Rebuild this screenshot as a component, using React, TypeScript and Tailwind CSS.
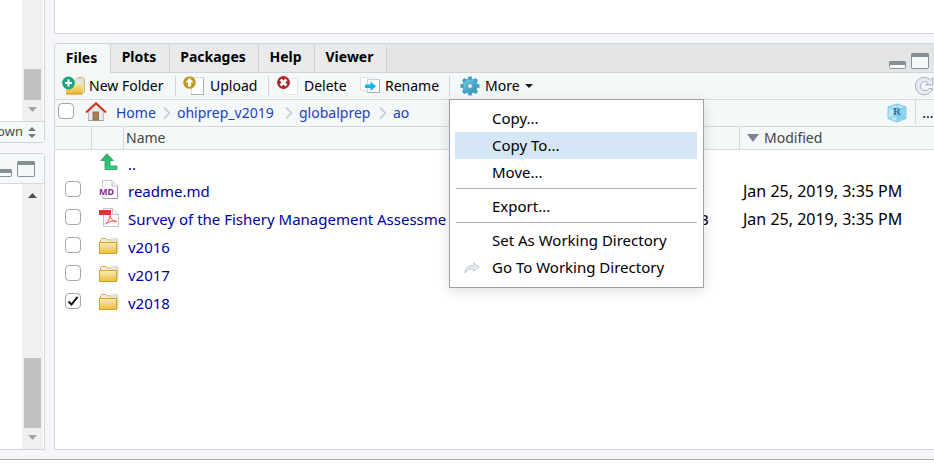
import type { ReactNode } from "react";

const font = "font-['Noto_Sans','Open_Sans',sans-serif]";

function MinimizeIcon() {
  return (
    <svg width="17" height="8" viewBox="0 0 17 8" className="shrink-0">
      <rect x="0.5" y="0.5" width="16" height="7" rx="1" fill="#f7fafa" stroke="#859398" />
      <path d="M0 2Q0 0 2 0H15Q17 0 17 2V4H0Z" fill="#859094" />
    </svg>
  );
}

function MaximizeIcon() {
  return (
    <svg width="18" height="16" viewBox="0 0 18 16" className="shrink-0">
      <rect x="0.5" y="0.5" width="17" height="15" rx="1" fill="#f4f8f9" stroke="#859398" />
      <path d="M0 2Q0 0 2 0H16Q18 0 18 2V4H0Z" fill="#859094" />
    </svg>
  );
}

function NewFolderIcon() {
  return (
    <svg width="23" height="19" viewBox="0 0 23 19">
      <defs>
        <linearGradient id="folderNew" x1="0" y1="0" x2="0" y2="1">
          <stop offset="0" stopColor="#f7edae" />
          <stop offset="1" stopColor="#edb62c" />
        </linearGradient>
      </defs>
      <path d="M14 3.5L16 1.5H21L22.5 3V16L20 17.5H14Z" fill="#e5dfc3" stroke="#cdb66d" />
      <path d="M12 6L15 3H20V8H12Z" fill="#e4e4e2" />
      <path d="M4 7H20.5V18H4Z" fill="url(#folderNew)" />
      <path d="M4 18H20.5" stroke="#c99619" />
      <circle cx="6.5" cy="7" r="6.4" fill="#18a77c" />
      <path d="M6.5 3.5V10.5M3 7H10" stroke="#fff" strokeWidth="2.2" />
    </svg>
  );
}

function UploadIcon() {
  return (
    <svg width="21" height="19" viewBox="0 0 21 19">
      <path d="M6.5 1.5H20.5V18.5H8.5V10Z" fill="#fff" stroke="#d4d9dc" />
      <path d="M8 18.5H20.5V3" fill="none" stroke="#a9afb4" />
      <circle cx="6.5" cy="6.5" r="6.3" fill="#c29b1e" />
      <path d="M6.5 2L10.5 6.5H8V10.5H5V6.5H2.5Z" fill="#fff" />
    </svg>
  );
}

function DeleteIcon() {
  return (
    <svg width="21" height="19" viewBox="0 0 21 19">
      <path d="M5.5 2.5H20.5V18.5H6.5Z" fill="#fff" stroke="#e2e6e8" />
      <circle cx="6.5" cy="6.5" r="6.4" fill="#b3202a" />
      <path d="M3.6 3.6L9.4 9.4M9.4 3.6L3.6 9.4" stroke="#fff" strokeWidth="2.8" />
    </svg>
  );
}

function RenameIcon() {
  return (
    <svg width="21" height="17" viewBox="0 0 21 17">
      <rect x="0.5" y="0.5" width="13" height="13" fill="#fff" stroke="#dde2e5" />
      <rect x="7.5" y="2.5" width="12" height="13" fill="#fdfeff" stroke="#cbd0d5" />
      <path d="M7 15.5H19.5V3" fill="none" stroke="#a5abb1" />
      <path d="M5 7.5H10.5V4.5L16 9.2L10.5 14V11H5Z" fill="#19aef0" />
    </svg>
  );
}

function GearIcon() {
  const teeth = [0, 45, 90, 135, 180, 225, 270, 315];
  return (
    <svg width="20" height="20" viewBox="0 0 20 20">
      <defs>
        <linearGradient id="gear" x1="0" y1="0" x2="1" y2="1">
          <stop offset="0" stopColor="#6fd6e6" />
          <stop offset="1" stopColor="#2b87b8" />
        </linearGradient>
      </defs>
      <g fill="#3c9fc4">
        {teeth.map((a) => (
          <path key={a} d="M7.2 5L8.4 0.4H11.6L12.8 5Z" transform={`rotate(${a} 10 10)`} />
        ))}
      </g>
      <circle cx="10" cy="10" r="7" fill="url(#gear)" stroke="#45a5c5" />
      <circle cx="10" cy="10" r="2.6" fill="#d7edf3" stroke="#6e9dae" strokeWidth="1.2" />
    </svg>
  );
}

function RefreshIcon() {
  return (
    <svg width="19" height="20" viewBox="0 0 19 20">
      <path
        d="M17.8 1.5V9H10.8L13.2 6.6A4.6 4.6 0 1 0 14 12.5H17.6A8.8 8.8 0 1 1 15.4 3.8Z"
        fill="#e6ebf5"
        stroke="#a9b0bd"
        strokeLinejoin="round"
      />
    </svg>
  );
}

function HomeIcon() {
  return (
    <svg width="22" height="20" viewBox="0 0 22 20">
      <path d="M3.5 9.5L11 2.5L18.5 9.5V18.5H3.5Z" fill="#e9e9ea" stroke="#bcbec0" />
      <path d="M3 18.5H19" stroke="#9fa2a5" />
      <rect x="8" y="10" width="5.5" height="8" fill="#ab7f55" stroke="#8a6440" strokeWidth="0.8" />
      <path d="M1 10.5L11 1.3L21 10.5" fill="none" stroke="#cf3018" strokeWidth="2" />
    </svg>
  );
}

function ProjectIcon() {
  return (
    <svg width="20" height="20" viewBox="0 0 20 20">
      <path d="M10 1L19 4V15.5L10 19L1 15.5V4Z" fill="#b4e6f7" stroke="#7acbe0" />
      <path d="M10 7L19 4V15.5L10 19Z" fill="#8dd3f0" />
      <path d="M1 4L10 7L19 4M10 7V19M1 15.5L10 12.5L19 15.5M10 1V7" fill="none" stroke="#74c6dd" strokeWidth="0.8" />
      <text x="6" y="12" fontSize="11" fontWeight="bold" fill="#3a6fa8" className="font-['Liberation_Serif',serif]">
        R
      </text>
    </svg>
  );
}

function Chevron() {
  return (
    <svg width="8" height="14" viewBox="0 0 8 14" className="shrink-0">
      <path d="M1 1.5L6.5 7L1 12.5" fill="none" stroke="#c3c9ce" strokeWidth="1.5" />
    </svg>
  );
}

function UpIcon() {
  return (
    <svg width="18" height="18" viewBox="0 0 18 18">
      <defs>
        <linearGradient id="up" x1="0" y1="0" x2="0" y2="1">
          <stop offset="0" stopColor="#2fae68" />
          <stop offset="1" stopColor="#35cf82" />
        </linearGradient>
      </defs>
      <path d="M7 0.7L13.3 7.5H10V13H17V16.5H5V7.5H0.8Z" fill="url(#up)" stroke="#2a9c5f" strokeWidth="0.8" />
    </svg>
  );
}

function MarkdownIcon() {
  return (
    <svg width="20" height="20" viewBox="0 0 20 20">
      <path d="M3.5 0.5H13L18.5 6V18.5H3.5Z" fill="#fcfcfc" stroke="#c4c4c4" />
      <path d="M13 0.5V6H18.5" fill="#f2f2f2" stroke="#c4c4c4" />
      <path d="M4 18.5H18.5V6" fill="none" stroke="#a2a2a2" />
      <rect x="0" y="7" width="15" height="9" fill="#fcfcfc" />
      <text x="0" y="15" fontSize="9" fontWeight="bold" fill="#8a2a92" className="font-['Noto_Sans',sans-serif]">
        MD
      </text>
    </svg>
  );
}

function PdfIcon() {
  return (
    <svg width="20" height="20" viewBox="0 0 20 20">
      <path d="M4.5 0.5H13.5L19.5 6.5V18.5H4.5Z" fill="#fcfcfc" stroke="#c4c4c4" />
      <path d="M13.5 0.5V6.5H19.5" fill="#f2f2f2" stroke="#c4c4c4" />
      <rect x="0" y="2" width="12" height="5" fill="#e03438" />
      <path
        d="M11 7.5C11.5 11 13.5 13 17.5 14C18 12.5 13 12 7 15.5C5.5 16.5 7.5 16.5 9 13.5Q11 10 11 7.5Z"
        fill="none"
        stroke="#f0584d"
      />
    </svg>
  );
}

function FolderIcon() {
  return (
    <svg width="20" height="18" viewBox="0 0 20 18">
      <defs>
        <linearGradient id="folder" x1="0" y1="0" x2="0" y2="1">
          <stop offset="0" stopColor="#f7efb0" />
          <stop offset="1" stopColor="#eebb3c" />
        </linearGradient>
      </defs>
      <path d="M12 2L14 0.8H18L19.5 2.5V15L17.5 16.5H12Z" fill="#e2dab5" />
      <path d="M1.5 6V2.8L3 1.5H7L8.5 3L16 2.8V6" fill="#f3efd9" stroke="#cdae4d" />
      <path d="M11 3.2L13 1H17V5H11Z" fill="#e2e2e0" />
      <rect x="0.5" y="5.5" width="17" height="11" fill="url(#folder)" stroke="#d3a331" />
    </svg>
  );
}

function ShareArrow() {
  return (
    <svg width="16" height="12" viewBox="0 0 16 12">
      <path d="M9.5 0.8L15.2 5L9.5 9.3V6.8Q4 6.5 0.8 11Q1.2 3.6 9.5 3.4Z" fill="#e5e9ee" stroke="#c1c7ce" strokeWidth="0.9" />
    </svg>
  );
}

function Checkbox({ label, checked = false }: { label: string; checked?: boolean }) {
  return (
    <label className="relative block size-4">
      <input
        type="checkbox"
        aria-label={label}
        defaultChecked={checked}
        className="peer block size-4 appearance-none rounded border border-[#a6a6a6] bg-white"
      />
      <svg
        width="16"
        height="16"
        viewBox="0 0 16 16"
        className="pointer-events-none absolute top-0 left-0 hidden peer-checked:block"
      >
        <path d="M3.5 8.5L6.5 11.5L12.5 3.8" fill="none" stroke="#161616" strokeWidth="2" />
      </svg>
    </label>
  );
}

function Divider() {
  return <span className="h-5 w-px shrink-0 bg-[#cfd4d8]" />;
}

function ToolButton({ icon, children, className }: { icon: ReactNode; children: ReactNode; className: string }) {
  return (
    <button type="button" className={`flex shrink-0 items-center whitespace-nowrap ${className}`}>
      {icon}
      {children}
    </button>
  );
}

function Arrow({ up = false, dark = false }: { up?: boolean; dark?: boolean }) {
  return (
    <svg width="9" height="5" viewBox="0 0 9 5" className="shrink-0">
      <path d={up ? "M0 5L4.5 0L9 5Z" : "M0 0H9L4.5 5Z"} fill={dark ? "#505050" : "#a3a3a3"} />
    </svg>
  );
}

function MenuItem({ children, icon, active = false }: { children: ReactNode; icon?: ReactNode; active?: boolean }) {
  return (
    <li role="none">
      <button
        type="button"
        role="menuitem"
        className={`flex h-[27px] w-full items-center text-left text-[15px] ${active ? "bg-[#d5e7f6]" : ""}`}
      >
        <span className="flex w-[37px] justify-center pr-1">{icon}</span>
        {children}
      </button>
    </li>
  );
}

function MenuSeparator() {
  return <li role="separator" className="ml-px mt-0.5 mb-1 h-px bg-[#b4b4b8]" />;
}

const tabs = [
  { name: "Files", width: "w-14" },
  { name: "Plots", width: "w-[59px]" },
  { name: "Packages", width: "w-[89px]" },
  { name: "Help", width: "w-14" },
  { name: "Viewer", width: "w-[72px]" },
];

const crumbs = [
  { name: "Home", width: "w-[47px]" },
  { name: "ohiprep_v2019", width: "w-[108px]" },
  { name: "globalprep", width: "w-20" },
  { name: "ao", width: "" },
];

const files = [
  { name: "readme.md", icon: <MarkdownIcon />, size: "", modified: "Jan 25, 2019, 3:35 PM" },
  {
    name: "Survey of the Fishery Management Assessme",
    icon: <PdfIcon />,
    size: "B",
    modified: "Jan 25, 2019, 3:35 PM",
  },
  { name: "v2016", icon: <FolderIcon />, size: "", modified: "" },
  { name: "v2017", icon: <FolderIcon />, size: "", modified: "" },
  { name: "v2018", icon: <FolderIcon />, size: "", modified: "", checked: true },
];

function LeftColumn() {
  return (
    <aside className="flex w-[45px] shrink-0 flex-col gap-2.5">
      <section className="flex h-[143px] flex-col rounded-br border-r border-b border-[#d0d5d9] bg-white">
        <div className="flex flex-1 justify-end pr-px">
          <div className="flex w-[21px] flex-col items-center justify-end gap-[7px] bg-[#f0f0f0] pb-[9px]">
            <span className="h-[31px] w-[17px] bg-[#c1c1c1]" />
            <Arrow />
          </div>
        </div>
        <div className="flex h-[21px] items-center gap-2 border-t border-[#d6dadc] bg-[#f4f8f9] text-[13px] text-[#4c4c4c]">
          <span className="flex w-5 justify-center">own</span>
          <svg width="8" height="11" viewBox="0 0 8 11" className="shrink-0">
            <path d="M0 4L4 0L8 4ZM0 7H8L4 11Z" fill="#777" />
          </svg>
        </div>
      </section>
      <section className="flex flex-1 flex-col rounded-tr border-t border-r border-b border-[#d0d5d9] bg-white">
        <div className="flex h-[30px] items-end justify-end gap-[5px] overflow-hidden border-b border-[#d6dadc] bg-[#f4f8f9] pr-[9px] pb-1.5">
          <MinimizeIcon />
          <MaximizeIcon />
        </div>
        <div className="flex flex-1 justify-end pr-px">
          <div className="flex w-[21px] flex-col items-center bg-[#f0f0f0] pt-[9px] pb-[9px]">
            <Arrow up dark />
            <span className="mt-auto mb-[7px] h-[70px] w-[17px] bg-[#c1c1c1]" />
            <Arrow />
          </div>
        </div>
      </section>
    </aside>
  );
}

function MoreMenu() {
  return (
    <ul
      role="menu"
      className="absolute top-full left-0 z-10 w-[255px] border border-[#9da1a8] bg-white pt-[5px] pr-1.5 pb-1.5 pl-[5px] shadow-[0_3px_12px_rgba(0,0,0,0.14)]"
    >
      <MenuItem>Copy...</MenuItem>
      <MenuItem active>Copy To...</MenuItem>
      <MenuItem>Move...</MenuItem>
      <MenuSeparator />
      <MenuItem>Export...</MenuItem>
      <MenuSeparator />
      <MenuItem>Set As Working Directory</MenuItem>
      <MenuItem icon={<ShareArrow />}>Go To Working Directory</MenuItem>
    </ul>
  );
}

function FilesPane() {
  return (
    <section className="flex flex-1 flex-col rounded-tl border-t border-b border-l border-[#d0d5d9] bg-white">
      <div className="flex h-[29px] shrink-0 rounded-tl bg-[#e4e5e7]">
        <div role="tablist" className="flex text-sm font-bold">
          {tabs.map((tab, i) => (
            <button
              key={tab.name}
              type="button"
              role="tab"
              aria-selected={i === 0}
              className={`flex items-center justify-center rounded-t border-r border-[#d0d3d6] pr-0.5 pb-0.5 ${tab.width} ${
                i === 0 ? "bg-[#f4f8f9]" : "border-b bg-[#e9eaec]"
              }`}
            >
              {tab.name}
            </button>
          ))}
        </div>
        <div className="flex flex-1 items-end justify-end gap-[5px] border-b border-[#d0d3d6] pr-[5px] pb-[3px]">
          <MinimizeIcon />
          <MaximizeIcon />
        </div>
      </div>

      <div className="flex h-[27px] shrink-0 border-b border-[#d6dadc] bg-[#f4f8f9] text-sm">
        <div className="flex items-center pl-[7px]">
          <ToolButton icon={<NewFolderIcon />} className="w-[113px] gap-1 pb-px">
            New Folder
          </ToolButton>
          <Divider />
          <ToolButton icon={<UploadIcon />} className="w-[92px] gap-1.5 pb-px pl-[7px]">
            Upload
          </ToolButton>
          <Divider />
          <ToolButton icon={<DeleteIcon />} className="w-[91px] gap-1.5 pb-px pl-2">
            Delete
          </ToolButton>
          <ToolButton icon={<RenameIcon />} className="w-[89px] gap-1 pb-px">
            Rename
          </ToolButton>
        </div>
        <div className="relative flex items-center">
          <Divider />
          <ToolButton icon={<GearIcon />} className="gap-[5px] pl-2.5">
            More
            <svg width="8" height="4" viewBox="0 0 8 4" aria-hidden="true">
              <path d="M0 0H8L4 4Z" fill="#1c1c1c" />
            </svg>
          </ToolButton>
          <MoreMenu />
        </div>
        <button type="button" aria-label="Refresh" className="ml-auto self-center">
          <RefreshIcon />
        </button>
      </div>

      <div className="flex h-[27px] shrink-0 items-center border-b border-[#d6dadc] bg-[#f4f8f9] pl-[3px] text-sm">
        <div className="mb-1">
          <Checkbox label="Select all" />
        </div>
        <nav className="flex flex-1 items-center pl-[11px]">
          <a href="#home" aria-label="Go home" className="mr-[9px] mb-0.5">
            <HomeIcon />
          </a>
          {crumbs.map((crumb, i) => (
            <span key={crumb.name} className="flex items-center">
              <a href={`#${crumb.name}`} className={`whitespace-nowrap text-[#1a41c0] ${crumb.width}`}>
                {crumb.name}
              </a>
              {i < crumbs.length - 1 && (
                <span className="mr-1.5">
                  <Chevron />
                </span>
              )}
            </span>
          ))}
        </nav>
        <button type="button" aria-label="Project directory" className="mr-2">
          <ProjectIcon />
        </button>
        <span className="mb-0.5 h-6 w-px bg-[#d6dadc]" />
        <button type="button" className="w-[18px] pl-1.5">
          ...
        </button>
      </div>

      <table className="w-full table-fixed border-separate border-spacing-0 text-left">
        <colgroup>
          <col className="w-[37px]" />
          <col className="w-8" />
          <col />
          <col className="w-[47px]" />
          <col className="w-[195px]" />
        </colgroup>
        <thead>
          <tr className="h-[23px] bg-[#f4f8f9] text-sm leading-5 text-[#444]">
            <th className="border-r border-b border-[#d6dadc] p-0" />
            <th className="border-r border-b border-[#d6dadc] p-0" />
            <th className="border-b border-[#d6dadc] p-0 pl-0.5 font-normal">Name</th>
            <th className="border-b border-[#d6dadc] p-0" />
            <th className="border-b border-l border-[#d6dadc] p-0 pl-[7px] font-normal">
              <span className="flex items-center gap-[5px]">
                <svg width="12" height="8" viewBox="0 0 12 8" aria-hidden="true">
                  <path d="M0 0H12L6 8Z" fill="#7b8594" />
                </svg>
                Modified
              </span>
            </th>
          </tr>
        </thead>
        <tbody className="text-[15px] leading-5">
          <tr className="h-[27px]">
            <td className="p-0" />
            <td className="p-0 pb-[3px] pl-2">
              <UpIcon />
            </td>
            <td className="p-0 pl-1">
              <a href="#up" className="text-[#00009c]">
                ..
              </a>
            </td>
            <td className="p-0" />
            <td className="p-0" />
          </tr>
          {files.map((file) => (
            <tr key={file.name} className="h-7">
              <td className="p-0 pb-1 pl-2.5">
                <Checkbox label={file.name} checked={file.checked} />
              </td>
              <td className="p-0 pb-0.5 pl-[7px]">{file.icon}</td>
              <td className="overflow-hidden p-0 pl-1 whitespace-nowrap">
                <a href={`#${file.name}`} className="text-[#00009c]">
                  {file.name}
                </a>
              </td>
              <td className="p-0 pl-[7px]">{file.size}</td>
              <td className="p-0 pl-1 text-base leading-5 whitespace-nowrap">{file.modified}</td>
            </tr>
          ))}
        </tbody>
      </table>
    </section>
  );
}

export default function App() {
  return (
    <div className={`flex h-screen flex-col overflow-hidden bg-white pb-[3px] text-black ${font}`}>
      <div className="flex flex-1 gap-[9px] border-b border-[#ababad] bg-[#f5f6f9] pb-[9px]">
        <LeftColumn />
        <main className="flex min-w-0 flex-1 flex-col gap-[9px]">
          <section className="h-[34px] shrink-0 border-b border-l border-[#d0d5d9] bg-white" />
          <FilesPane />
        </main>
      </div>
    </div>
  );
}
